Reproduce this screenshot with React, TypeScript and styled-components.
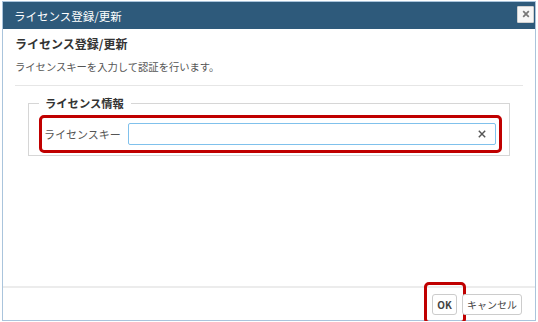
import styled, { createGlobalStyle } from 'styled-components'

const GlobalStyle = createGlobalStyle`
  html, body {
    margin: 0;
    padding: 0;
    background: #ffffff;
  }
  body {
    font-family: "Noto Sans CJK JP", "Noto Sans", sans-serif;
  }
`

const Window = styled.div`
  box-sizing: border-box;
  display: flex;
  flex-direction: column;
  width: 534px;
  height: 320px;
  margin: 1px 0 0 2px;
  border: 1px solid #aac4dc;
  background: #ffffff;
`

const TitleBar = styled.div`
  display: flex;
  align-items: center;
  justify-content: space-between;
  height: 27px;
  padding: 0 1px 0 11px;
  background: #2e5a7b;
`

const TitleText = styled.span`
  color: #ffffff;
  font-size: 11.5px;
  line-height: 16px;
`

const CloseButton = styled.button`
  box-sizing: border-box;
  display: flex;
  align-items: center;
  justify-content: center;
  width: 17px;
  height: 17px;
  padding: 0;
  margin-top: -3px;
  border: 1px solid #d0d0d0;
  border-radius: 1px;
  background: #f6f6f6;
`

const CloseIcon = styled.svg`
  width: 8px;
  height: 8px;
`

const Body = styled.div`
  flex: 1;
  padding: 7px 12px 0 12px;
`

const Heading = styled.div`
  color: #333333;
  font-size: 12px;
  font-weight: bold;
  line-height: 16px;
`

const Description = styled.div`
  margin-top: 8px;
  color: #555555;
  font-size: 10.3px;
  line-height: 14px;
`

const Separator = styled.hr`
  margin: 11px 0 0 0;
  border: none;
  border-top: 1px solid #e6e6e6;
`

const Fieldset = styled.fieldset`
  margin: 9px 13px 0 13px;
  padding: 4px 7px 2px 10px;
  border: 1px solid #d6d6d6;
`

const Legend = styled.legend`
  padding: 0 7px 0 6px;
  color: #333333;
  font-size: 11.3px;
  font-weight: bold;
  line-height: 16px;
`

const HighlightRow = styled.div`
  display: flex;
  align-items: center;
  gap: 7px;
  height: 32px;
  padding: 0 3px 0 2px;
  border: 3px solid #c00000;
  border-radius: 5px;
`

const FieldLabel = styled.label`
  color: #555555;
  font-size: 11px;
  white-space: nowrap;
`

const InputBox = styled.div`
  box-sizing: border-box;
  display: flex;
  align-items: center;
  flex: 1;
  height: 22px;
  padding: 0 9px 0 4px;
  border: 1px solid #80c1ec;
  border-radius: 2px;
`

const TextInput = styled.input`
  flex: 1;
  min-width: 0;
  border: none;
  outline: none;
  background: transparent;
  font-size: 11px;
`

const ClearIcon = styled.svg`
  width: 8px;
  height: 8px;
`

const Footer = styled.div`
  display: flex;
  justify-content: flex-end;
  align-items: flex-start;
  gap: 5px;
  height: 34px;
  padding: 2px 13px 0 0;
  box-sizing: border-box;
  border-top: 2px solid #ececec;
`

const ButtonWrap = styled.div<{ $highlight?: boolean }>`
  position: relative;
  ${({ $highlight }) =>
    $highlight &&
    `
    &::after {
      content: '';
      position: absolute;
      left: -8px;
      right: -9px;
      top: -8px;
      bottom: -9px;
      border: 3px solid #c00000;
      border-radius: 5px;
      pointer-events: none;
    }
  `}
`

const Button = styled.button<{ $bold?: boolean }>`
  box-sizing: border-box;
  height: 21px;
  padding: 0 3px;
  border: 1px solid #cccccc;
  border-radius: 3px;
  background: #ffffff;
  color: #444444;
  font-family: "Noto Sans CJK JP", "Noto Sans", sans-serif;
  font-size: 10px;
  font-weight: ${({ $bold }) => ($bold ? 'bold' : 'normal')};
  line-height: 19px;
  white-space: nowrap;
`

export default function App() {
  return (
    <>
      <GlobalStyle />
      <Window>
        <TitleBar>
          <TitleText>ライセンス登録/更新</TitleText>
          <CloseButton aria-label="close">
            <CloseIcon viewBox="0 0 10 10">
              <path d="M1.5 1.5 L8.5 8.5 M8.5 1.5 L1.5 8.5" stroke="#777777" strokeWidth="2.2" />
            </CloseIcon>
          </CloseButton>
        </TitleBar>
        <Body>
          <Heading>ライセンス登録/更新</Heading>
          <Description>ライセンスキーを入力して認証を行います。</Description>
          <Separator />
          <Fieldset>
            <Legend>ライセンス情報</Legend>
            <HighlightRow>
              <FieldLabel htmlFor="license-key">ライセンスキー</FieldLabel>
              <InputBox>
                <TextInput id="license-key" type="text" />
                <ClearIcon viewBox="0 0 10 10">
                  <path d="M1 1 L9 9 M9 1 L1 9" stroke="#555555" strokeWidth="1.8" />
                </ClearIcon>
              </InputBox>
            </HighlightRow>
          </Fieldset>
        </Body>
        <Footer>
          <ButtonWrap $highlight>
            <Button $bold style={{ width: 25 }}>OK</Button>
          </ButtonWrap>
          <ButtonWrap>
            <Button style={{ width: 60 }}>キャンセル</Button>
          </ButtonWrap>
        </Footer>
      </Window>
    </>
  )
}
